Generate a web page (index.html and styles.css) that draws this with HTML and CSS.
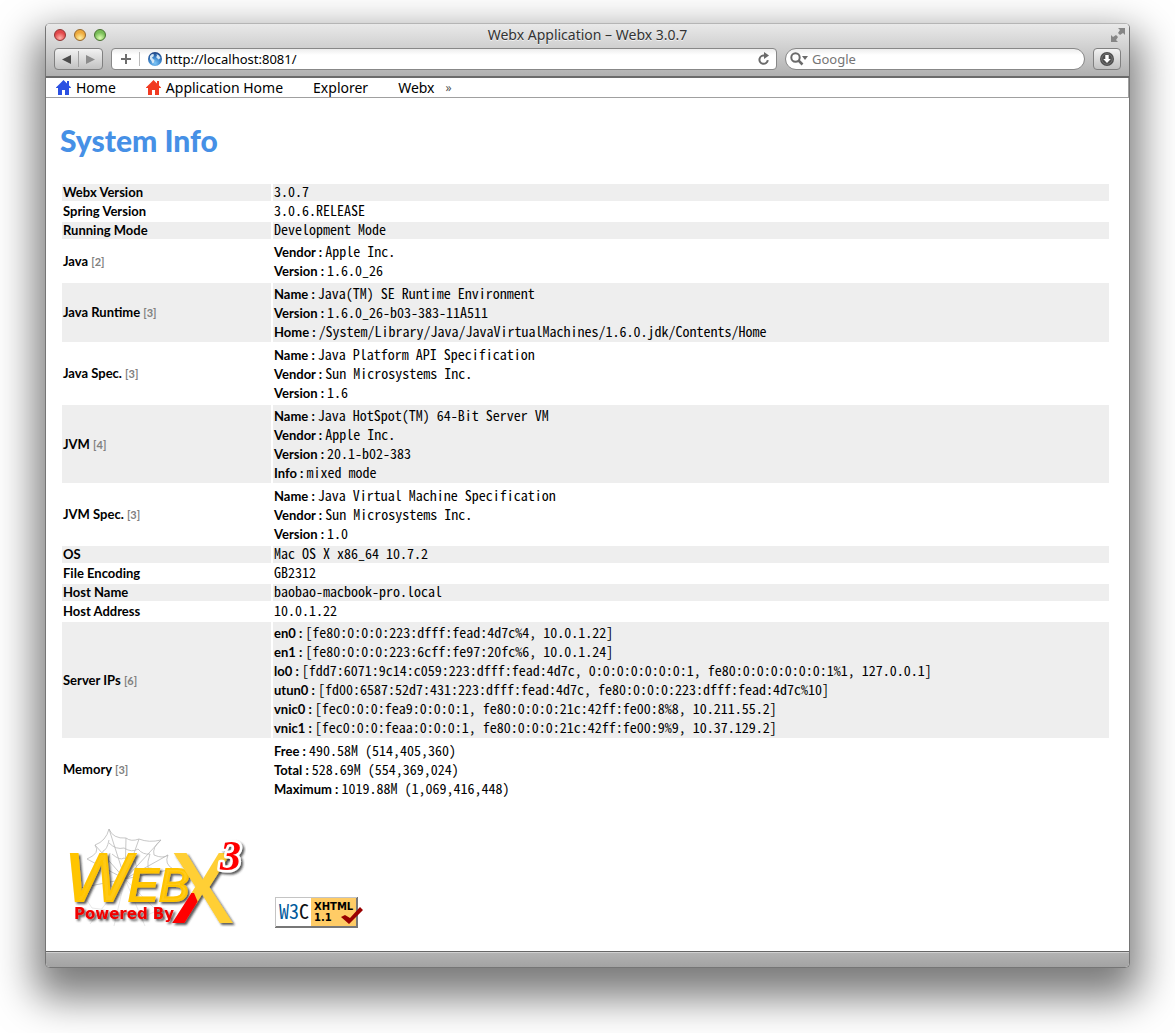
FILE: index.html
```html
<!DOCTYPE html>
<html lang="en">
<head>
<meta charset="utf-8">
<title>Webx Application – Webx 3.0.7</title>
<link rel="stylesheet" href="styles.css">
</head>
<body>
<div class="window">
  <header class="chrome">
    <div class="titlebar">
      <div class="lights">
        <button class="light light-close" type="button" aria-label="Close"></button>
        <button class="light light-min" type="button" aria-label="Minimize"></button>
        <button class="light light-zoom" type="button" aria-label="Zoom"></button>
      </div>
      <div class="title">Webx Application – Webx 3.0.7</div>
      <button class="expand" type="button" aria-label="Full screen">
        <svg width="14" height="14" viewBox="0 0 14 14"><path d="M7 0h7v7l-2-2-3 2-2-2 2-3zM0 7l2 2 3-2 2 2-2 3 2 2H0z" fill="#858585"/></svg>
      </button>
    </div>
    <div class="toolbar">
      <div class="history">
        <button class="nav-button" type="button" aria-label="Back"><svg width="9" height="9" viewBox="0 0 9 9"><path d="M0 4.500L9 0v9z" fill="#4c4c4c"/></svg></button>
        <button class="nav-button" type="button" aria-label="Forward"><svg width="9" height="9" viewBox="0 0 9 9"><path d="M9 4.500L0 0v9z" fill="#8c8c8c"/></svg></button>
      </div>
      <div class="address">
        <button class="plain add" type="button" aria-label="Add bookmark"><svg width="10" height="10" viewBox="0 0 10 10"><path d="M5 0v10M0 5h10" stroke="#6e6e6e" stroke-width="2"/></svg></button>
        <svg class="globe" width="14" height="14" viewBox="0 0 14 14">
          <defs><radialGradient id="sea" cx=".5" cy=".8" r=".8"><stop offset="0" stop-color="#7fc8f8"/><stop offset=".5" stop-color="#3d86cc"/><stop offset="1" stop-color="#1c4080"/></radialGradient></defs>
          <circle cx="7" cy="7" r="7" fill="url(#sea)"/>
          <path d="M2 4l2-2 2 .5-.5 2L4 5.500 5 7l1.500 1-.5 2.500-1.500 1-1-2.500L2 7zM8.500 2l2.500 1.500 1.500 2.500-2 1.500L9 6l-1-1 1-1z" fill="#d4e6f4"/>
        </svg>
        <input class="url" type="text" value="http://localhost:8081/" aria-label="Address">
        <button class="plain" type="button" aria-label="Reload"><svg width="12" height="14" viewBox="0 0 12 14"><path d="M9.800 8.200A4.200 4.200 0 1 1 6.800 3.600" fill="none" stroke="#6a6a6a" stroke-width="2"/><path d="M6 0l5 3.600-5 3.400z" fill="#6a6a6a"/></svg></button>
      </div>
      <div class="search">
        <svg width="18" height="14" viewBox="0 0 18 14"><circle cx="5.500" cy="5.500" r="4.200" fill="none" stroke="#6a6a6a" stroke-width="2"/><path d="M8.500 8.500l4 4" stroke="#6a6a6a" stroke-width="2.500"/><path d="M12 4h6l-3 4z" fill="#6a6a6a"/></svg>
        <input class="query" type="search" placeholder="Google" aria-label="Google">
      </div>
      <button class="downloads" type="button" aria-label="Downloads"><svg width="14" height="14" viewBox="0 0 14 14"><circle cx="7" cy="7" r="7" fill="#4e4e4e"/><circle cx="7" cy="7" r="5.300" fill="none" stroke="#8b8b8b" stroke-width=".6"/><path d="M5.300 3h3.400v4h2.100L7 11 3.200 7h2.100z" fill="#fff"/></svg></button>
    </div>
  </header>

  <main class="page">
    <nav class="bookmarks">
      <a href="#home"><svg width="15" height="15" viewBox="0 0 15 15"><path d="M7.500 0L11 3.500V1h2v4.500l2 2V8h-2v7H9v-5H6v5H2V8H0v-.5z" fill="#2b50e2"/></svg>Home</a>
      <a href="#app"><svg width="15" height="15" viewBox="0 0 15 15"><path d="M7.500 0L11 3.500V1h2v4.500l2 2V8h-2v7H9v-5H6v5H2V8H0v-.5z" fill="#f13a22"/></svg>Application Home</a>
      <a href="#explorer">Explorer</a>
      <a href="#webx">Webx <span class="more">»</span></a>
    </nav>

    <div class="content">
      <h1>System Info</h1>
      <table class="info">
        <tr><th scope="row">Webx Version</th><td>3.0.7</td></tr>
        <tr><th scope="row">Spring Version</th><td>3.0.6.RELEASE</td></tr>
        <tr><th scope="row">Running Mode</th><td>Development Mode</td></tr>
        <tr><th scope="row">Java <small>[2]</small></th><td><dl>
          <div><dt>Vendor :</dt><dd>Apple Inc.</dd></div>
          <div><dt>Version :</dt><dd>1.6.0_26</dd></div></dl></td></tr>
        <tr><th scope="row">Java Runtime <small>[3]</small></th><td><dl>
          <div><dt>Name :</dt><dd>Java(TM) SE Runtime Environment</dd></div>
          <div><dt>Version :</dt><dd>1.6.0_26-b03-383-11A511</dd></div>
          <div><dt>Home :</dt><dd>/System/Library/Java/JavaVirtualMachines/1.6.0.jdk/Contents/Home</dd></div></dl></td></tr>
        <tr><th scope="row">Java Spec. <small>[3]</small></th><td><dl>
          <div><dt>Name :</dt><dd>Java Platform API Specification</dd></div>
          <div><dt>Vendor :</dt><dd>Sun Microsystems Inc.</dd></div>
          <div><dt>Version :</dt><dd>1.6</dd></div></dl></td></tr>
        <tr><th scope="row">JVM <small>[4]</small></th><td><dl>
          <div><dt>Name :</dt><dd>Java HotSpot(TM) 64-Bit Server VM</dd></div>
          <div><dt>Vendor :</dt><dd>Apple Inc.</dd></div>
          <div><dt>Version :</dt><dd>20.1-b02-383</dd></div>
          <div><dt>Info :</dt><dd>mixed mode</dd></div></dl></td></tr>
        <tr><th scope="row">JVM Spec. <small>[3]</small></th><td><dl>
          <div><dt>Name :</dt><dd>Java Virtual Machine Specification</dd></div>
          <div><dt>Vendor :</dt><dd>Sun Microsystems Inc.</dd></div>
          <div><dt>Version :</dt><dd>1.0</dd></div></dl></td></tr>
        <tr><th scope="row">OS</th><td>Mac OS X x86_64 10.7.2</td></tr>
        <tr><th scope="row">File Encoding</th><td>GB2312</td></tr>
        <tr><th scope="row">Host Name</th><td>baobao-macbook-pro.local</td></tr>
        <tr><th scope="row">Host Address</th><td>10.0.1.22</td></tr>
        <tr><th scope="row">Server IPs <small>[6]</small></th><td><dl>
          <div><dt>en0 :</dt><dd>[fe80:0:0:0:223:dfff:fead:4d7c%4, 10.0.1.22]</dd></div>
          <div><dt>en1 :</dt><dd>[fe80:0:0:0:223:6cff:fe97:20fc%6, 10.0.1.24]</dd></div>
          <div><dt>lo0 :</dt><dd>[fdd7:6071:9c14:c059:223:dfff:fead:4d7c, 0:0:0:0:0:0:0:1, fe80:0:0:0:0:0:0:1%1, 127.0.0.1]</dd></div>
          <div><dt>utun0 :</dt><dd>[fd00:6587:52d7:431:223:dfff:fead:4d7c, fe80:0:0:0:223:dfff:fead:4d7c%10]</dd></div>
          <div><dt>vnic0 :</dt><dd>[fec0:0:0:fea9:0:0:0:1, fe80:0:0:0:21c:42ff:fe00:8%8, 10.211.55.2]</dd></div>
          <div><dt>vnic1 :</dt><dd>[fec0:0:0:feaa:0:0:0:1, fe80:0:0:0:21c:42ff:fe00:9%9, 10.37.129.2]</dd></div></dl></td></tr>
        <tr><th scope="row">Memory <small>[3]</small></th><td><dl>
          <div><dt>Free :</dt><dd>490.58M (514,405,360)</dd></div>
          <div><dt>Total :</dt><dd>528.69M (554,369,024)</dd></div>
          <div><dt>Maximum :</dt><dd>1019.88M (1,069,416,448)</dd></div></dl></td></tr>
      </table>

      <footer class="credits">
        <a href="#webx-logo" aria-label="Powered by Webx 3">
          <svg class="logo" width="180" height="104" viewBox="0 0 180 104">
            <defs>
              <linearGradient id="gold" x1="0" y1="0" x2="1" y2="0"><stop offset="0" stop-color="#ffc400"/><stop offset="1" stop-color="#ffcc20"/></linearGradient>
              <filter id="drop" x="-10%" y="-10%" width="130%" height="130%"><feDropShadow dx="2" dy="2" stdDeviation="1" flood-color="#222" flood-opacity=".75"/></filter>
              <clipPath id="leg"><path d="M90 109V69h34l6 14-10 26z"/></clipPath>
              <clipPath id="arms"><path d="M90 0h90v109h-50l-3-22-3-14-5-6H90z"/></clipPath>
            </defs>
            <g transform="translate(0 2)">
            <g fill="none" stroke="#b9b9b9" stroke-width=".8">
              <path d="M39 3Q36 15 25 19Q31 27 17 33M39 3Q43 13 56 12Q61 16 69 13Q79 17 91 14Q82 21 84 29Q93 33 98 29Q94 38 103 43"/>
              <path d="M39 14Q37 24 33 25Q32 35 27 40M39 17Q46 24 54 22Q62 27 68 23Q73 29 80 28Q77 36 78 42Q86 42 90 47"/>
              <path d="M40 27Q37 35 38 42M42 28Q50 35 54 32Q60 36 65 35Q68 42 66 48"/>
              <path d="M55 53L39 3M55 53L56 12M55 53L69 13M55 53L91 14M55 53L98 29M55 53L25 19M55 53L17 33M55 53L10 62M55 53L103 43"/>
            </g>
            <g fill="none" stroke="#e2e2e2" stroke-width=".8"><path d="M55 53L20 98M55 53L44 100M55 53L75 100M55 53L98 96M12 63Q16 75 22 82Q34 82 44 88Q60 82 75 92Q84 82 98 86"/></g>
            </g>
            <g filter="url(#drop)">
              <g fill="url(#gold)" stroke="#ffc400" font-family="Liberation Sans, sans-serif" font-style="italic">
                <text x="-5" y="77" font-size="69" stroke-width="2">W</text>
                <text x="58" y="77" font-size="46" stroke-width="2">EB</text>
              </g>
              <g font-family="Open Sans, sans-serif" font-weight="600" font-size="98">
                <text x="102" y="99" fill="#ffcf35" clip-path="url(#arms)">X</text>
                <text x="102" y="99" fill="#f00" clip-path="url(#leg)">X</text>
              </g>
            </g>
            <text x="4" y="95" font-family="DejaVu Sans, sans-serif" font-weight="700" font-size="15" fill="#f20000" filter="url(#drop)">Powered By</text>
            <text x="150" y="46" font-family="Liberation Serif, serif" font-weight="700" font-style="italic" font-size="42" fill="#f00" stroke="#fff" stroke-width="5" paint-order="stroke" stroke-linejoin="round" filter="url(#drop)">3</text>
          </svg>
        </a>
        <a href="#xhtml" aria-label="Valid XHTML 1.1">
          <svg class="badge" width="88" height="31" viewBox="0 0 88 31">
            <path d="M0 0h83v31H0z" fill="#777"/><path d="M0 0h82v1H1v29H0z" fill="#c4c4c4"/>
            <path d="M1 1h35v28H1z" fill="#fff"/><path d="M36 1h45v28H36z" fill="#fc6"/>
            <text class="w3c" x="4" y="22" fill="#005a9c">W3<tspan fill="#111">C</tspan></text>
            <g font-family="DejaVu Sans, sans-serif" font-weight="700" font-size="10"><text x="39" y="13">XHTML</text><text x="39" y="24">1.1</text></g>
            <path d="M66 20l4-2 5 3 10-11 3 3-14 14z" fill="#900"/>
          </svg>
        </a>
      </footer>
    </div>
  </main>
  <div class="statusbar"></div>
</div>
</body>
</html>
```
FILE: styles.css
```css
* { box-sizing: border-box; }

body {
  margin: 0;
  padding: 23px 45px 65px;
  background: #fff;
  color: #000;
  font-family: "Noto Sans", sans-serif;
  overflow-x: hidden;
}

button {
  padding: 0;
  border: 0;
  background: none;
}

svg { display: block; flex: none; overflow: visible; }

.window {
  border: 1px solid #757575;
  border-top-color: #b5b5b5;
  border-radius: 5px;
  background: #fff;
  box-shadow: 0 20px 40px 10px rgba(0, 0, 0, .52);
}

.chrome {
  border-bottom: 2px solid #6b6b6b;
  border-radius: 4px 4px 0 0;
  background: linear-gradient(#e9e9e9, #d0d0d0 45%, #b0b0b0);
}

.titlebar {
  display: grid;
  grid-template-columns: 1fr auto 1fr;
  align-items: center;
  height: 24px;
  padding: 0 4px 2px;
}

.lights { display: flex; gap: 8px; padding-left: 4px; }

.light {
  width: 12px;
  height: 12px;
  border: 1px solid #6b5a50;
  border-radius: 50%;
}
.light-close { background: radial-gradient(circle at 50% 80%, #ffb0a8, #e2474a 60%); border-color: #8f3432; }
.light-min { background: radial-gradient(circle at 50% 80%, #fff0a0, #eda93c 60%); border-color: #94672c; }
.light-zoom { background: radial-gradient(circle at 50% 80%, #dcffb0, #78bd57 60%); border-color: #47702f; }

.title {
  color: #333;
  font-size: 14px;
  line-height: 20px;
  text-shadow: 0 1px 0 #f2f2f2;
}

.expand { justify-self: end; }

.toolbar {
  display: flex;
  gap: 8px;
  height: 28px;
  padding: 0 8px 6px;
}

.history,
.downloads {
  display: flex;
  border: 1px solid #808080;
  border-radius: 4px;
  background: linear-gradient(#f2f2f2, #c2c2c2);
}

.history { width: 49px; padding: 2px 0; }

.nav-button {
  display: grid;
  flex: 1;
  place-items: center;
}
.nav-button + .nav-button { border-left: 1px solid #a0a0a0; }

.address,
.search {
  display: flex;
  align-items: center;
  border: 1px solid #888;
  background: linear-gradient(#ededed, #fff 30%);
}

.address {
  flex: 658 1 0;
  padding: 0 6px 0 0;
  border-radius: 4px;
}

.search {
  flex: 284 1 0;
  gap: 4px;
  padding: 0 10px 0 4px;
  border-radius: 11px;
}

.plain { display: grid; place-items: center; }

.add {
  width: 28px;
  height: 14px;
  border-right: 1px solid #bbb;
}

.globe { margin-left: 8px; }

.url,
.query {
  flex: 1;
  min-width: 0;
  padding: 0;
  border: 0;
  outline: 0;
  background: none;
  color: #000;
  font: 13px/18px "Noto Sans", sans-serif;
}
.url { padding-left: 3px; }
.query::placeholder { color: #757575; opacity: 1; }

.downloads {
  width: 28px;
  align-items: center;
  justify-content: center;
}

.bookmarks {
  display: flex;
  gap: 30px;
  height: 20px;
  padding: 0 10px;
  border-right: 1px solid #a0a0a0;
  border-bottom: 1px solid #a0a0a0;
}

.bookmarks a {
  display: flex;
  align-items: center;
  gap: 5px;
  color: #000;
  font-size: 14px;
  line-height: 18px;
  text-decoration: none;
}

.more {
  padding-left: 6px;
  color: #555;
  font-size: 12px;
}

.content { padding: 22px 18px 23px 14px; }

h1 {
  margin: 0 0 22px;
  color: #4690e6;
  font: 900 30px/40px Lato, sans-serif;
}

.info {
  width: 100%;
  border-spacing: 2px;
}

.info th,
.info td {
  height: 17px;
  padding: 0 1px;
  text-align: left;
  vertical-align: middle;
}

.info tr:nth-child(odd) th,
.info tr:nth-child(odd) td { background: #eee; }

.info th { width: 20%; font: 700 13px/17px Lato, sans-serif; }

.info dt { font: 700 13px/19px Lato, sans-serif; }

.info td {
  font: 14px/14px "Noto Sans CJK SC", monospace;
  font-feature-settings: "hwid";
  font-variant-ligatures: none;
  vertical-align: top;
}

.info small {
  color: #808080;
  font-size: 11px;
  font-weight: 700;
}

dl { margin: 0; padding-top: 2px; }

dl div {
  display: flex;
  align-items: baseline;
  gap: 3px;
  height: 19px;
}

dd { margin: 0; }

.credits {
  display: flex;
  align-items: flex-end;
  gap: 25px;
  padding: 23px 0 0 10px;
}

.w3c {
  font: 20px "Noto Sans CJK SC", sans-serif;
  font-feature-settings: "hwid";
}

.statusbar {
  height: 16px;
  border-top: 1px solid #666;
  border-radius: 0 0 4px 4px;
  background: linear-gradient(#d0d0d0 1px, #b2b2b2 1px, #a3a3a3);
}
```
